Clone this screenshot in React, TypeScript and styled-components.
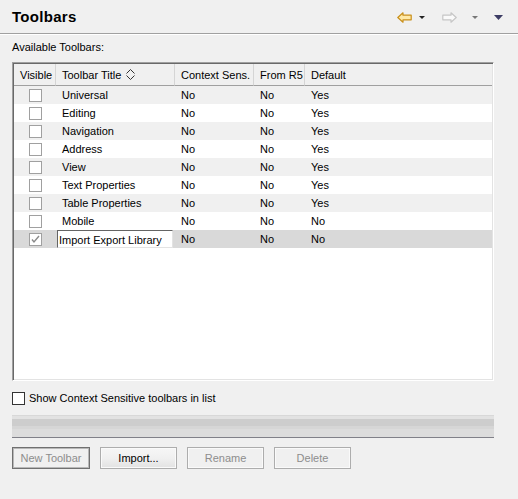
import * as React from 'react';
import styled, { createGlobalStyle } from 'styled-components';

interface Toolbar {
  title: string;
  context: string;
  fromR5: string;
  def: string;
  visible?: boolean;
}

const toolbars: Toolbar[] = [
  { title: 'Universal', context: 'No', fromR5: 'No', def: 'Yes' },
  { title: 'Editing', context: 'No', fromR5: 'No', def: 'Yes' },
  { title: 'Navigation', context: 'No', fromR5: 'No', def: 'Yes' },
  { title: 'Address', context: 'No', fromR5: 'No', def: 'Yes' },
  { title: 'View', context: 'No', fromR5: 'No', def: 'Yes' },
  { title: 'Text Properties', context: 'No', fromR5: 'No', def: 'Yes' },
  { title: 'Table Properties', context: 'No', fromR5: 'No', def: 'Yes' },
  { title: 'Mobile', context: 'No', fromR5: 'No', def: 'No' },
  { title: 'Import Export Library', context: 'No', fromR5: 'No', def: 'No', visible: true },
];

const GlobalStyle = createGlobalStyle`
  html, body {
    margin: 0;
    background: #f0f0f0;
  }
  body {
    font-family: "Liberation Sans", Arial, sans-serif;
    font-size: 11px;
    color: #000;
  }
`;

const Page = styled.div`
  width: 518px;
  height: 499px;
  display: flex;
  flex-direction: column;
  background: #f0f0f0;
`;

const Header = styled.div`
  height: 33px;
  display: flex;
  align-items: center;
  justify-content: space-between;
  padding: 0 15px 0 12px;
  border-bottom: 1px solid #a0a0a0;
  box-shadow: 0 1px 0 #fff;
`;

const Title = styled.h1`
  margin: 0;
  font-size: 15px;
  font-weight: bold;
  letter-spacing: 0.3px;
`;

const NavIcons = styled.div`
  display: flex;
  align-items: center;
  gap: 7px;
  padding-top: 2px;
`;

const Body = styled.div`
  display: flex;
  flex-direction: column;
  padding: 7px 24px 0 12px;
`;

const Label = styled.div`
  height: 13px;
  line-height: 13px;
`;

const Frame = styled.div`
  margin-top: 8px;
  height: 315px;
  border-top: 1px solid #a0a0a0;
  border-left: 1px solid #a0a0a0;
  border-right: 1px solid #fff;
  border-bottom: 1px solid #fff;
  box-shadow: inset 1px 1px 0 #696969, inset -1px -1px 0 #e3e3e3;
  background: #fff;
  padding: 1px;
  display: flex;
  flex-direction: column;
`;

const Row = styled.div<{ $bg: string; $height: number }>`
  display: grid;
  grid-template-columns: 42px 119px 79px 51px 1fr;
  height: ${p => p.$height}px;
  background: ${p => p.$bg};
  flex-shrink: 0;
`;

const HeadCell = styled.div<{ $last?: boolean }>`
  display: flex;
  align-items: center;
  padding-left: 6px;
  border-right: ${p => (p.$last ? 'none' : '1px solid #d5d5d5')};
  border-bottom: 1px solid #a0a0a0;
  white-space: nowrap;
  gap: 5px;
`;

const Cell = styled.div<{ $center?: boolean; $flush?: boolean }>`
  display: flex;
  align-items: center;
  justify-content: ${p => (p.$center ? 'center' : 'flex-start')};
  padding-left: ${p => (p.$center ? '1px' : p.$flush ? '0' : '6px')};
  white-space: nowrap;
`;

const EditBox = styled.div`
  margin-left: 1px;
  width: 116px;
  height: 18px;
  box-sizing: border-box;
  background: #fff;
  border-top: 1px solid #646464;
  border-left: 1px solid #646464;
  border-right: 1px solid #e3e3e3;
  border-bottom: 1px solid #e3e3e3;
  display: flex;
  align-items: center;
  padding-left: 1px;
  padding-top: 1px;
  white-space: nowrap;
`;

const Box = styled.span<{ $dark?: boolean }>`
  width: 13px;
  height: 13px;
  box-sizing: border-box;
  border: 1px solid ${p => (p.$dark ? '#333' : '#a0a0a0')};
  background: #fff;
  display: inline-flex;
  align-items: center;
  justify-content: center;
  flex-shrink: 0;
`;

const CheckLine = styled.label`
  display: flex;
  align-items: center;
  gap: 4px;
  margin-top: 11px;
  height: 13px;
  line-height: 13px;
`;

const Sash = styled.div`
  margin-top: 10px;
  height: 22px;
  background: linear-gradient(
    #d8d8d8 0px,
    #d8d8d8 1px,
    #e2e2e2 1px,
    #e2e2e2 4px,
    #cdcdcd 4px,
    #cdcdcd 11px,
    #d6d6d6 11px,
    #d6d6d6 14px,
    #dcdcdc 14px
  );
  border-bottom: 1px solid #808088;
`;

const Buttons = styled.div`
  display: flex;
  gap: 10px;
  margin-top: 9px;
`;

const Button = styled.button<{ $default?: boolean; $disabled?: boolean }>`
  width: ${p => (p.$default ? 78 : 77)}px;
  height: 22px;
  box-sizing: border-box;
  font-family: "Liberation Sans", Arial, sans-serif;
  font-size: 11px;
  padding: 0;
  color: ${p => (p.$disabled ? '#8d8d8d' : '#000')};
  border: 1px solid ${p => (p.$default ? '#707070' : '#adadad')};
  box-shadow: ${p =>
    p.$default ? 'inset 0 0 0 1px #b8b8b8' : 'inset 0 0 0 1px #fafafa'};
  background: ${p =>
    p.$disabled ? '#f0f0f0' : 'linear-gradient(#f6f6f6, #f0f0f0 50%, #e2e2e2)'};
`;

const Spacer = styled.span<{ $w: number }>`
  width: ${p => p.$w}px;
`;

const SortIcon = () => (
  <svg width="9" height="11" viewBox="0 0 9 11">
    <polyline points="0.5,4.5 4.5,0.5 8.5,4.5" fill="none" stroke="#333" strokeWidth="1" />
    <polyline points="0.5,6.5 4.5,10.5 8.5,6.5" fill="none" stroke="#333" strokeWidth="1" />
  </svg>
);

const Tick = () => (
  <svg width="9" height="9" viewBox="0 0 9 9">
    <polyline points="1,4.5 3,7 8,1" fill="none" stroke="#8a8a8a" strokeWidth="1.4" />
  </svg>
);

const Arrow = ({ flip, fill, stroke }: { flip?: boolean; fill: string; stroke: string }) => (
  <svg width="15" height="11" viewBox="0 0 15 11">
    <path
      d="M0.8 5.5 L6 0.8 L6 3.2 L14.2 3.2 L14.2 7.8 L6 7.8 L6 10.2 Z"
      fill={fill}
      stroke={stroke}
      strokeWidth="1.2"
      strokeLinejoin="round"
      transform={flip ? 'translate(15 0) scale(-1 1)' : undefined}
    />
  </svg>
);

const Tri = ({ w, h, color }: { w: number; h: number; color: string }) => (
  <svg width={w} height={h} viewBox={`0 0 ${w} ${h}`}>
    <polygon points={`0,0 ${w},0 ${w / 2},${h}`} fill={color} />
  </svg>
);

const App: React.FC = () => {
  const rows = toolbars.map((t, i) => {
    const bg = t.visible ? '#d9d9d9' : i % 2 === 0 ? '#f0f0f0' : '#fff';
    return (
      <Row key={t.title} $bg={bg} $height={18}>
        <Cell $center>
          <Box>{t.visible && <Tick />}</Box>
        </Cell>
        {t.visible ? (
          <Cell $flush>
            <EditBox>{t.title}</EditBox>
          </Cell>
        ) : (
          <Cell>{t.title}</Cell>
        )}
        <Cell>{t.context}</Cell>
        <Cell>{t.fromR5}</Cell>
        <Cell>{t.def}</Cell>
      </Row>
    );
  });

  return (
    <Page>
      <GlobalStyle />
      <Header>
        <Title>Toolbars</Title>
        <NavIcons>
          <Arrow fill="#ffe9a6" stroke="#c98f1a" />
          <Tri w={6} h={3} color="#222" />
          <Spacer $w={3} />
          <Arrow flip fill="#fafafa" stroke="#c6c6c6" />
          <Spacer $w={1} />
          <Tri w={6} h={3} color="#777" />
          <Spacer $w={2} />
          <Tri w={9} h={5} color="#3c3c64" />
        </NavIcons>
      </Header>
      <Body>
        <Label>Available Toolbars:</Label>
        <Frame>
          <Row $bg="#f0f0f0" $height={22}>
            <HeadCell>Visible</HeadCell>
            <HeadCell>
              Toolbar Title <SortIcon />
            </HeadCell>
            <HeadCell>Context Sens.</HeadCell>
            <HeadCell>From R5</HeadCell>
            <HeadCell $last>Default</HeadCell>
          </Row>
          {rows}
        </Frame>
        <CheckLine>
          <Box $dark />
          Show Context Sensitive toolbars in list
        </CheckLine>
        <Sash />
        <Buttons>
          <Button $default $disabled>
            New Toolbar
          </Button>
          <Button>Import...</Button>
          <Button $disabled>Rename</Button>
          <Button $disabled>Delete</Button>
        </Buttons>
      </Body>
    </Page>
  );
};

export default App;
